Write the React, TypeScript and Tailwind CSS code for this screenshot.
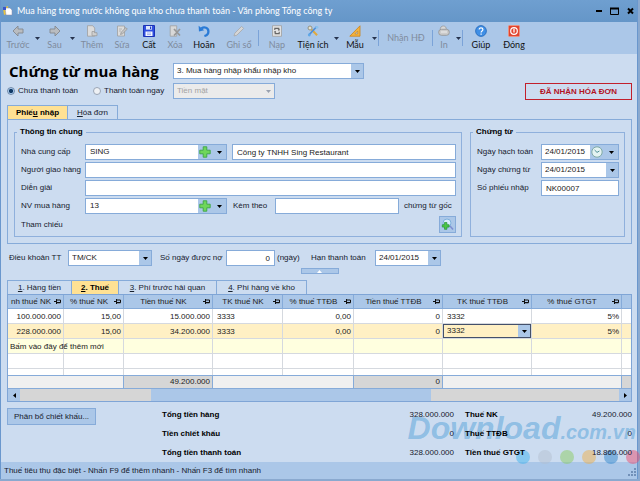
import type { ReactNode } from "react";

const field =
  "h-4 min-w-0 border border-[#86abd9] bg-white px-1 text-[8px] leading-[14px] text-[#222] outline-none";

/* =====================
   SMALL PARTS
====================== */
function Caret({ className = "" }: { className?: string }) {
  return (
    <svg viewBox="0 0 5 3" className={`h-[3px] w-[5px] shrink-0 ${className}`}>
      <path d="M0 0h5L2.5 3z" fill="currentColor" />
    </svg>
  );
}

function Plus() {
  return (
    <svg viewBox="0 0 12 12" className="h-3 w-3">
      <path
        d="M4.2.8h3.6v3.4h3.4v3.6H7.8v3.4H4.2V7.8H.8V4.2h3.4z"
        fill="#6fd65a"
        stroke="#3da545"
        strokeWidth="0.9"
      />
    </svg>
  );
}

function Select({ id, label, value, className = "", disabled = false }: any) {
  return (
    <div className={`relative h-4 ${className}`}>
      <select
        id={id}
        aria-label={label}
        disabled={disabled}
        defaultValue={value}
        className={`block h-full w-full appearance-none border border-[#86abd9] pr-3 pl-[3px] text-[8px] leading-[14px] outline-none ${
          disabled ? "bg-[#ebebeb] text-[#a3a3a3]" : "bg-white text-[#222]"
        }`}
      >
        <option>{value}</option>
      </select>
      <span
        className={`pointer-events-none absolute inset-y-px right-px flex w-3 items-center justify-center ${
          disabled ? "text-gray-400" : "bg-[#abc7e8] text-black"
        }`}
      >
        <Caret />
      </span>
    </div>
  );
}

function LookupBox({ id, value }: { id: string; value: string }) {
  return (
    <div className="flex h-4 w-[142px] border border-[#86abd9] bg-[#abc7e8]">
      <input id={id} defaultValue={value} className="min-w-0 flex-1 bg-white px-1 text-[8px] leading-[14px] text-[#222] outline-none" />
      <button aria-label="Thêm mới" className="flex w-[14px] items-center justify-center">
        <Plus />
      </button>
      <button aria-label="Chọn" className="flex w-[14px] items-center justify-center text-black">
        <Caret />
      </button>
    </div>
  );
}

function Group({ title, className, children }: { title: string; className: string; children: ReactNode }) {
  return (
    <fieldset className={`min-w-0 border border-[#8fb0dc] pr-[5px] pl-[6px] ${className}`}>
      <legend className="-ml-1 px-[3px] leading-3 font-bold text-black">{title}</legend>
      {children}
    </fieldset>
  );
}

/* =====================
   TOOLBAR
====================== */
const icons: Record<string, ReactNode> = {
  back: <path d="M6 1 1 6l5 5V8h5V4H6z" fill="#b9bcc0" stroke="#83888f" strokeWidth="0.9" />,
  next: <path d="M6 1l5 5-5 5V8H1V4h5z" fill="#b9bcc0" stroke="#83888f" strokeWidth="0.9" />,
  add: (
    <>
      <path d="M1.5.7h5.2l2 2.3v8.2H1.5z" fill="#dcdcdc" stroke="#a0a0a0" strokeWidth="0.8" />
      <path d="M6 6.5h2.5v1.2H11v3H6z" fill="#cfcfcf" stroke="#979797" strokeWidth="0.7" />
    </>
  ),
  edit: (
    <>
      <path d="M1.5 1h7v10h-7z" fill="#dcdcdc" stroke="#a0a0a0" strokeWidth="0.8" />
      <path d="M3 4h3M3 6h2" stroke="#a8a8a8" strokeWidth="0.8" />
      <path d="m4.5 9.5.7-2.3L9.8 2.6l1.5 1.5-4.6 4.6z" fill="#c4c4c4" stroke="#909090" strokeWidth="0.7" />
    </>
  ),
  save: (
    <>
      <path d="M.5.5h11v11H.5z" fill="#2f4fe0" stroke="#1c33b5" />
      <path d="M3 1h6v3.6H3z" fill="#dfe8fb" />
      <path d="M2.5 6.5h7V11h-7z" fill="#f4f7ff" />
      <path d="M7 1.5h1.2v2.4H7z" fill="#2740c4" />
      <path d="M4 8h4M4 9.6h4" stroke="#7f93e0" strokeWidth="0.7" />
    </>
  ),
  remove: (
    <>
      <path d="M1.2.8h6.5v10.4H1.2z" fill="#d8d8d8" stroke="#a0a0a0" strokeWidth="0.8" />
      <path d="m5 4 6 6.5M11 4l-6 6.5" stroke="#979797" strokeWidth="1.7" />
    </>
  ),
  undo: (
    <>
      <path d="M3.4 3.4c3-2 7-.6 7 3 0 2.4-1.6 4-4 4.6" fill="none" stroke="#2a7bd6" strokeWidth="2.3" />
      <path d="M.6.8 1 6.6l5.2-1.3z" fill="#2a7bd6" />
    </>
  ),
  pencil: <path d="M1 11l.8-2.8L8.6 1.4l2 2-6.8 6.8z" fill="#d6d6d6" stroke="#a7a7a7" strokeWidth="0.8" />,
  reload: (
    <>
      <path d="M1.5.7h9v10.6h-9z" fill="#e3e3e3" stroke="#a0a0a0" strokeWidth="0.8" />
      <path d="M3.8 5V3.4h4V5M8.2 6.8v1.8h-4V6.8" fill="none" stroke="#666" strokeWidth="1.1" />
      <path d="M6.6 4.6h2.6L7.9 6zM5.4 7.2H2.8L4.1 5.8z" fill="#666" />
    </>
  ),
  tools: (
    <>
      <circle cx="3" cy="3" r="2" fill="#e6e2cf" stroke="#8b8a7a" strokeWidth="0.9" />
      <path d="m4.5 4.5 5.6 5.8" stroke="#e0a93c" strokeWidth="2" />
      <path d="M9.8 1.5 2 9.8" stroke="#4d8fdb" strokeWidth="1.7" />
      <circle cx="10" cy="2.3" r="1.4" fill="#8ac3ee" />
      <circle cx="2.3" cy="10" r="1.4" fill="#5fa7e6" />
    </>
  ),
  ruler: (
    <>
      <path d="M11 .8v10.4H.8z" fill="#f3b33f" stroke="#c98319" strokeWidth="0.8" />
      <path d="M8.7 6v3H5.8z" fill="#abc7e8" stroke="#c98319" strokeWidth="0.6" />
    </>
  ),
  print: (
    <>
      <path d="M2.5 5C1.8 2.6 3.4.8 5.6 1c2 .1 2.8 1.6 2.6 3.4" fill="#d8d8d8" stroke="#989898" strokeWidth="0.8" />
      <rect x="0.7" y="4.3" width="10.6" height="6" rx="2.8" fill="#cbcbcb" stroke="#909090" strokeWidth="0.8" />
      <path d="M3 7h6" stroke="#eee" />
    </>
  ),
  help: (
    <>
      <circle cx="6" cy="6" r="5.4" fill="#3f8fe6" stroke="#2166b8" strokeWidth="0.8" />
      <path d="M4.2 4.6c0-2.4 3.7-2.2 3.7 0C7.9 6 6.1 5.9 6.1 7.5M6.1 8.6v1.2" fill="none" stroke="#fff" strokeWidth="1.2" />
    </>
  ),
  close: (
    <>
      <rect x="0.5" y="0.5" width="11" height="11" rx="1" fill="#e2452f" stroke="#e9907f" />
      <circle cx="6" cy="6" r="3.3" fill="none" stroke="#fff" strokeWidth="1.2" />
      <path d="M6 3.6v4" stroke="#fff" strokeWidth="1.3" />
    </>
  ),
};

const tools: any[] = [
  { label: "Trước", icon: "back", width: "w-[30px]", off: true, menu: true },
  { label: "Sau", icon: "next", width: "w-[27px]", off: true, menu: true },
  { label: "Thêm", icon: "add", width: "w-8", off: true },
  { label: "Sửa", icon: "edit", width: "w-7", off: true },
  { label: "Cất", icon: "save", width: "w-[26px]" },
  { label: "Xóa", icon: "remove", width: "w-[26px]", off: true },
  { label: "Hoãn", icon: "undo", width: "w-8" },
  { label: "Ghi sổ", icon: "pencil", width: "w-[38px]", off: true, end: true },
  { label: "Nạp", icon: "reload", width: "w-[34px]", off: true },
  { label: "Tiện ích", icon: "tools", width: "w-[38px]", menu: true },
  { label: "Mẫu", icon: "ruler", width: "w-[30px]", menu: true, end: true },
  { label: "Nhận HĐ", width: "w-[52px]", off: true, end: true },
  { label: "In", icon: "print", width: "w-5", off: true, menu: true, end: true },
  { label: "Giúp", icon: "help", width: "w-[34px]" },
  { label: "Đóng", icon: "close", width: "w-8" },
];

function Toolbar() {
  return (
    <div className="flex h-8 bg-[#abc7e8] pl-[2px] font-['Lato','Open_Sans',sans-serif] text-[9px] leading-3">
      {tools.map((t) => (
        <div key={t.label} className="flex items-center">
          <button
            disabled={t.off}
            className={`flex h-full flex-col items-center justify-center gap-[2px] whitespace-nowrap ${t.width} ${
              t.off ? "text-[#7f8b9d]" : "text-[#111]"
            }`}
          >
            {t.icon && (
              <svg viewBox="0 0 12 12" className="h-3 w-3">
                {icons[t.icon]}
              </svg>
            )}
            {t.label}
          </button>
          {t.menu && (
            <button aria-label={`${t.label} khác`} className="flex w-2 justify-center text-[#26334d]">
              <Caret />
            </button>
          )}
          {t.end && <span className="mr-px h-4 w-px bg-[#7ba3d8]" />}
        </div>
      ))}
    </div>
  );
}

/* =====================
   DETAIL GRID
====================== */
const columns = [
  { label: "nh thuế NK", width: "w-[56px]" },
  { label: "% thuế NK", width: "w-[60px]" },
  { label: "Tiền thuế NK", width: "w-[89px]" },
  { label: "TK thuế NK", width: "w-[70px]" },
  { label: "% thuế TTĐB", width: "w-[71px]" },
  { label: "Tiền thuế TTĐB", width: "w-[89px]" },
  { label: "TK thuế TTĐB", width: "w-[89px]" },
  { label: "% thuế GTGT", width: "w-[90px]" },
];

const rows = [
  ["100.000.000", "15,00", "15.000.000", "3333", "0,00", "0", "3332", "5%"],
  ["228.000.000", "15,00", "34.200.000", "3333", "0,00", "0", "3332", "5%"],
];

const line = "border-r border-[#d5d9df] last:border-r-0";

function Grid() {
  return (
    <div className="border border-[#7fa5d6]">
      <table className="w-full table-fixed border-separate border-spacing-0 text-[8px] leading-[13px] whitespace-nowrap text-[#222]">
        <thead>
          <tr className="h-[14px] bg-[#abc7e8]">
            {columns.map((c) => (
              <th key={c.label} className={`overflow-hidden border-r border-b border-[#86abd9] p-0 font-normal ${c.width}`}>
                <div className="flex items-center pr-[2px]">
                  <span className="flex-1 text-center">{c.label}</span>
                  <svg viewBox="0 0 7 5" className="h-[5px] w-[7px] shrink-0">
                    <path d="M0 2.5h2M2.5 0v5M2.5 1h4v2.5h-4M2.5 3.8h4" fill="none" stroke="#111" />
                  </svg>
                </div>
              </th>
            ))}
            <th className="border-b border-[#86abd9] p-0" />
          </tr>
        </thead>
        <tbody>
          {rows.map((r, i) => (
            <tr key={r[0]} className={i === 1 ? "h-[15px] bg-[#fff0c4]" : "h-[15px] bg-white"}>
              {r.map((v, j) => (
                <td key={j} className={`border-b p-0 ${line} ${j === 3 || j === 6 ? "" : "text-right"}`}>
                  {i === 1 && j === 6 ? (
                    <div className="flex h-[14px] border border-[#44506a]">
                      <input aria-label="TK thuế TTĐB" defaultValue={v} className="min-w-0 flex-1 px-[3px] text-[8px] leading-3 outline-none" />
                      <button aria-label="Chọn tài khoản" className="flex w-3 items-center justify-center bg-[#abc7e8] text-black">
                        <Caret />
                      </button>
                    </div>
                  ) : (
                    <span className={j === 3 || j === 6 ? "pl-1" : "pr-[2px]"}>{v}</span>
                  )}
                </td>
              ))}
              <td className={`border-b p-0 ${line}`} />
            </tr>
          ))}
          <tr className="h-[15px] bg-[#ffffdf]">
            <td className={`border-b p-0 pl-[2px] ${line}`}>Bấm vào đây để thêm mới</td>
            {[...Array(8)].map((_, j) => (
              <td key={j} className={`border-b p-0 ${line}`} />
            ))}
          </tr>
          <tr className="h-[15px] bg-white">
            {[...Array(9)].map((_, j) => (
              <td key={j} className={`border-b p-0 ${line}`} />
            ))}
          </tr>
          <tr className="h-[6px] bg-white">
            {[...Array(9)].map((_, j) => (
              <td key={j} className={`p-0 ${line}`} />
            ))}
          </tr>
        </tbody>
        <tfoot className="leading-3">
          <tr className="h-[13px] bg-[#f0f0f0]">
            <td colSpan={2} className="border-t border-r border-[#86abd9] p-0" />
            <td className="border-t border-r border-[#86abd9] bg-[#d6d6d6] p-0 pr-[2px] text-right">49.200.000</td>
            <td colSpan={2} className="border-t border-r border-[#86abd9] p-0" />
            <td className="border-t border-r border-[#86abd9] bg-[#d6d6d6] p-0 pr-[2px] text-right">0</td>
            <td colSpan={2} className="border-t border-r border-[#86abd9] p-0" />
            <td className="border-t border-[#86abd9] bg-[#d6d6d6] p-0" />
          </tr>
        </tfoot>
      </table>

      {/* Horizontal scroll */}
      <div className="flex h-[13px] border-t border-[#86abd9] bg-[#d6d6d6] text-black">
        <button aria-label="Cuộn trái" className="flex w-3 items-center justify-center bg-[#abc7e8]">
          <Caret className="rotate-90" />
        </button>
        <div className="w-[21%]" />
        <div className="w-[45%] bg-[#abc7e8]" />
        <div className="flex-1" />
        <button aria-label="Cuộn phải" className="flex w-3 items-center justify-center bg-[#abc7e8]">
          <Caret className="-rotate-90" />
        </button>
      </div>
    </div>
  );
}

const totals = [
  ["Tổng tiền hàng", "328.000.000", "Thuế NK", "49.200.000"],
  ["Tiền chiết khấu", "0", "Thuế TTĐB", "0"],
  ["Tổng tiền thanh toán", "328.000.000", "Tiền thuế GTGT", "18.860.000"],
];

const dots = ["bg-[#3fb4ee]", "bg-[#b4bfd0]", "bg-[#8ccb62]", "bg-[#eeb04c]", "bg-[#2f86cc]", "bg-[#ea4d70]"];

export default function App() {
  return (
    <div className="overflow-hidden bg-[#8aa9cf] pr-[2px] pb-[2px]">
      <div className="border-x border-[#6a97cd] bg-[#ccdcf0] font-['Liberation_Sans',sans-serif] text-[8px] leading-3 text-[#16202e]">
        {/* Title bar */}
        <header className="flex h-[22px] items-center bg-linear-to-b from-[#6f9fd0] to-[#6596c8] pr-[3px] pl-[2px] text-white">
          <svg viewBox="0 0 10 10" className="h-[10px] w-[10px]">
            <path d="M0 2 5 0l1 7-5 2z" fill="#e8c33e" />
            <path d="M2 2h5l2 2v5H3z" fill="#fff" stroke="#88a" strokeWidth="0.5" />
            <path d="M0 1h3v3H0z" fill="#3c55c8" />
          </svg>
          <h1 className="flex-1 pl-1 font-['Lato','Open_Sans',sans-serif] text-[9px]">
            Mua hàng trong nước không qua kho chưa thanh toán - Văn phòng Tổng công ty
          </h1>
          <div className="flex items-center gap-2 text-black">
            <button aria-label="Thu nhỏ">
              <svg viewBox="0 0 6 8" className="h-2 w-[6px]">
                <path d="M0 4h6" stroke="currentColor" strokeWidth="2" />
              </svg>
            </button>
            <button aria-label="Phóng to">
              <svg viewBox="0 0 9 8" className="h-2 w-[9px]">
                <path d="M.5 1v6.5h8V1" fill="none" stroke="currentColor" />
                <path d="M0 1.5h9" stroke="currentColor" strokeWidth="2" />
              </svg>
            </button>
            <button aria-label="Đóng cửa sổ">
              <svg viewBox="0 0 7 8" className="h-2 w-[7px]">
                <path d="m1 1.5 5 5M6 1.5l-5 5" stroke="currentColor" strokeWidth="2" />
              </svg>
            </button>
          </div>
        </header>

        <Toolbar />

        <main className="pr-[5px] pl-[6px]">
          {/* Heading */}
          <div className="flex items-start justify-between pt-[9px]">
            <div className="grid grid-cols-[166px_191px] gap-y-1 whitespace-nowrap">
              <h2 className="pl-[2px] font-['Open_Sans',sans-serif] text-[15px] leading-4 font-bold text-black">
                Chứng từ mua hàng
              </h2>
              <Select label="Loại chứng từ" value="3. Mua hàng nhập khẩu nhập kho" />
              <div className="flex items-center gap-[15px]">
                <label className="flex items-center gap-[3px]">
                  <input
                    type="radio"
                    name="payment"
                    defaultChecked
                    className="h-2 w-2 appearance-none rounded-full border border-[#6d87a8] bg-white checked:bg-[radial-gradient(#123a66_45%,#a9cdf0_55%)]"
                  />
                  Chưa thanh toán
                </label>
                <label className="flex items-center gap-[3px]">
                  <input
                    type="radio"
                    name="payment"
                    className="h-2 w-2 appearance-none rounded-full border border-[#9aa5b5] bg-[#eef1f5]"
                  />
                  Thanh toán ngay
                </label>
              </div>
              <Select label="Hình thức thanh toán" value="Tiền mặt" className="w-[102px]" disabled />
            </div>
            <div className="mt-5 h-[17px] w-[107px] border border-[#c2202c] text-center leading-[15px] font-bold text-[#b3121f]">
              ĐÃ NHẬN HÓA ĐƠN
            </div>
          </div>

          {/* Voucher tabs */}
          <div className="mt-[5px] flex h-[14px] text-center leading-[13px]">
            <button className="w-[61px] border border-b-0 border-[#86abd9] bg-[#ffe193] font-bold text-black">
              Phiế<u>u</u> nhập
            </button>
            <button className="w-[50px] border border-b-0 border-l-0 border-[#86abd9]">
              <u>H</u>óa đơn
            </button>
          </div>

          <section className="flex gap-2 border border-[#86abd9] px-[6px] pt-[6px] pb-[6px]">
            <Group title="Thông tin chung" className="flex-1 pb-[3px]">
              <div className="grid grid-cols-[64px_minmax(0,1fr)] items-center gap-y-[2px] pt-[6px]">
                <label htmlFor="supplier">Nhà cung cấp</label>
                <div className="flex gap-[5px]">
                  <LookupBox id="supplier" value="SING" />
                  <input aria-label="Tên nhà cung cấp" defaultValue="Công ty TNHH Sing Restaurant" className={`flex-1 ${field}`} />
                </div>
                <label htmlFor="deliverer" className="whitespace-nowrap">Người giao hàng</label>
                <input id="deliverer" className={field} />
                <label htmlFor="note">Diễn giải</label>
                <input id="note" className={field} />
                <label htmlFor="buyer">NV mua hàng</label>
                <div className="flex items-center">
                  <LookupBox id="buyer" value="13" />
                  <label htmlFor="attached" className="w-12 pl-[6px] whitespace-nowrap">Kèm theo</label>
                  <input id="attached" className={`flex-1 ${field}`} />
                  <span className="w-[57px] pl-[5px] whitespace-nowrap">chứng từ gốc</span>
                </div>
                <span>Tham chiếu</span>
                <button aria-label="Tìm chứng từ tham chiếu" className="h-[17px] w-[17px] justify-self-end border border-[#86abd9] bg-[#abc7e8]">
                  <svg viewBox="0 0 15 15" className="h-full w-full">
                    <circle cx="7" cy="6" r="4" fill="#d9ecfb" stroke="#7fb0dc" />
                    <path d="m10 9 3 3.5" stroke="#7d8fd0" strokeWidth="1.6" />
                    <path d="M4.5 5.5h2.4v2.2h2.2v2.4H6.9v2.2H4.5v-2.2H2.3V7.7h2.2z" fill="#4cc741" stroke="#26923a" strokeWidth="0.7" />
                  </svg>
                </button>
              </div>
            </Group>

            <Group title="Chứng từ" className="w-[155px]">
              <div className="grid grid-cols-[64px_minmax(0,1fr)] items-center gap-y-[2px] pt-[6px] whitespace-nowrap">
                <label htmlFor="posted">Ngày hạch toán</label>
                <div className="flex h-4 border border-[#86abd9] bg-[#abc7e8]">
                  <input id="posted" defaultValue="24/01/2015" className="min-w-0 flex-1 bg-white pl-[3px] text-[8px] leading-[14px] text-[#222] outline-none" />
                  <button aria-label="Chọn giờ" className="flex w-[14px] items-center justify-center">
                    <svg viewBox="0 0 12 12" className="h-3 w-3">
                      <circle cx="6" cy="6" r="5.2" fill="#e4f3f2" stroke="#7fa9a5" />
                      <path d="M3.6 4 6 6.4 8.4 5" fill="none" stroke="#4f8f95" />
                    </svg>
                  </button>
                  <button aria-label="Chọn ngày" className="flex w-[14px] items-center justify-center text-black">
                    <Caret />
                  </button>
                </div>
                <label htmlFor="issued">Ngày chứng từ</label>
                <Select id="issued" value="24/01/2015" />
                <label htmlFor="receipt">Số phiếu nhập</label>
                <input id="receipt" defaultValue="NK00007" className={field} />
              </div>
            </Group>
          </section>

          {/* Payment terms */}
          <div className="flex items-center pt-[6px] whitespace-nowrap">
            <label htmlFor="terms" className="w-[61px] pl-[2px]">Điều khoản TT</label>
            <Select id="terms" value="TM/CK" className="w-[84px]" />
            <label htmlFor="days" className="w-[74px] pl-2">Số ngày được nợ</label>
            <input id="days" defaultValue="0" className={`w-[49px] text-right ${field}`} />
            <span className="w-9 pl-[2px]">(ngày)</span>
            <label htmlFor="due" className="w-16">Hạn thanh toán</label>
            <Select id="due" value="24/01/2015" className="w-[66px]" />
          </div>
          <button aria-label="Thu gọn" className="mx-auto mt-[2px] flex h-[6px] w-[38px] items-center justify-center border border-[#86abd9] bg-[#abc7e8] text-white">
            <Caret className="rotate-180" />
          </button>

          {/* Detail tabs */}
          <div className="mt-[6px] flex h-[14px] text-center leading-[13px]">
            <button className="w-[65px] border border-b-0 border-[#86abd9]">
              <u>1</u>. Hàng tiền
            </button>
            <button className="w-[47px] border-t border-r border-[#86abd9] bg-[#ffe193] font-bold text-black">
              <u>2</u>. Thuế
            </button>
            <button className="w-[98px] border-t border-r border-[#86abd9]">
              <u>3</u>. Phí trước hải quan
            </button>
            <button className="w-[90px] border-t border-r border-[#86abd9]">
              <u>4</u>. Phí hàng về kho
            </button>
          </div>
          <Grid />

          {/* Totals */}
          <div className="relative flex items-start pt-[3px]">
            <div className="w-[155px] pt-[3px]">
              <button className="h-[17px] w-[89px] border border-[#86abd9] bg-[#abc7e8] leading-[15px]">Phân bổ chiết khấu...</button>
            </div>
            <div
              aria-hidden="true"
              className="pointer-events-none absolute top-[12px] -right-1 leading-7 font-bold whitespace-nowrap text-[#2f8fd0]/40 italic"
            >
              <span className="text-[32px]">Download</span>
              <span className="text-[20px]">.com.vn</span>
            </div>
            <div aria-hidden="true" className="pointer-events-none absolute top-[48px] -right-2 flex gap-2">
              {dots.map((d) => (
                <span key={d} className={`h-[14px] w-[14px] rounded-full opacity-50 ${d}`} />
              ))}
            </div>
            <table className="relative flex-1 table-fixed border-separate border-spacing-0">
              <tbody>
                {totals.map((t) => (
                  <tr key={t[0]} className="h-[19px] align-middle">
                    <th className="p-0 text-left whitespace-nowrap text-black">{t[0]}</th>
                    <td className="p-0 text-right">{t[1]}</td>
                    <th className="w-[80px] p-0 pl-[11px] text-left whitespace-nowrap text-black">{t[2]}</th>
                    <td className="w-[98px] p-0 text-right">{t[3]}</td>
                  </tr>
                ))}
              </tbody>
            </table>
          </div>
        </main>

        {/* Status bar */}
        <footer className="flex h-[17px] items-center justify-between bg-[#abc7e8] pl-[3px]">
          <span>Thuế tiêu thụ đặc biệt - Nhấn F9 để thêm nhanh - Nhấn F3 để tìm nhanh</span>
          <svg viewBox="0 0 10 10" className="mt-[5px] h-[10px] w-[10px]">
            <path d="M7 1h2M4 4h2M7 4h2M1 7h2M4 7h2M7 7h2" stroke="#5f7fa8" strokeWidth="1.6" />
          </svg>
        </footer>
      </div>
    </div>
  );
}
